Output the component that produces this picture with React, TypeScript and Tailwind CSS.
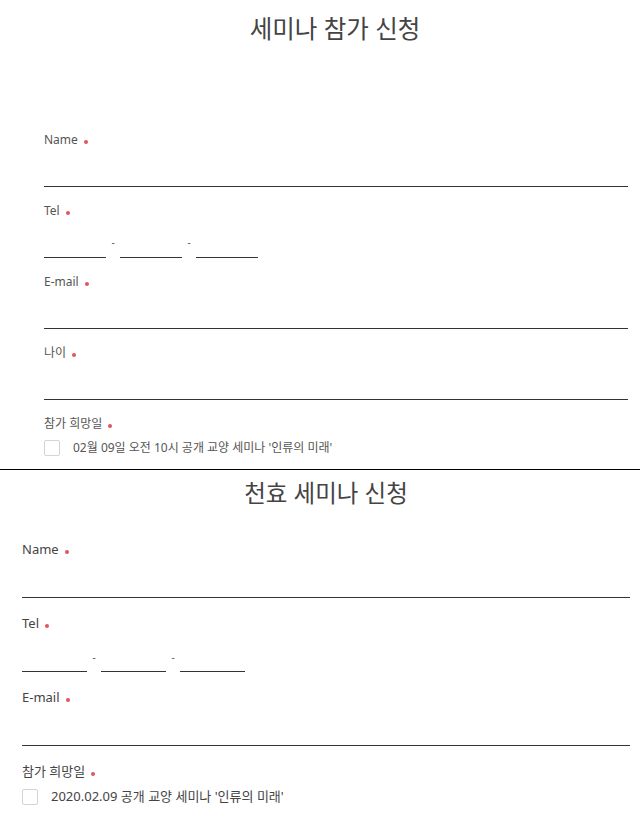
import React from "react";

const FONT = { fontFamily: '"Noto Sans", "Noto Sans CJK KR", sans-serif' };

function Label({ text, size }: { text: string; size: "top" | "bottom" }) {
  return (
    <div
      className={
        size === "top"
          ? "flex items-center h-[18px] text-[12px] text-[#555]"
          : "flex items-center h-[18px] text-[13px] text-[#444]"
      }
    >
      <span>{text}</span>
      <span className="ml-[6px] mt-[3px] w-[4px] h-[4px] rounded-full bg-[#e0565b]" />
    </div>
  );
}

function TextField({ label, size }: { label: string; size: "top" | "bottom" }) {
  return (
    <div className={size === "top" ? "mb-[15px]" : "mb-[17px]"}>
      <Label text={label} size={size} />
      <div
        className={
          size === "top"
            ? "h-[38px] border-b border-[#333]"
            : "h-[39px] border-b border-[#333]"
        }
      />
    </div>
  );
}

function TelField({ size }: { size: "top" | "bottom" }) {
  const seg = size === "top" ? "w-[62px] h-full border-b border-[#333]" : "w-[65px] h-full border-b border-[#333]";
  const dash =
    size === "top"
      ? "w-[14px] h-full flex justify-center pt-[17px] text-[10px] leading-[10px] text-[#555]"
      : "w-[14px] h-full flex justify-center pt-[19px] text-[10px] leading-[10px] text-[#555]";
  return (
    <div className={size === "top" ? "mb-[15px]" : "mb-[17px]"}>
      <Label text="Tel" size={size} />
      <div className={size === "top" ? "flex h-[38px]" : "flex h-[39px]"}>
        <div className={seg} />
        <div className={dash}>-</div>
        <div className={seg} />
        <div className={dash}>-</div>
        <div className={seg} />
      </div>
    </div>
  );
}

function DateField({ size, text }: { size: "top" | "bottom"; text: string }) {
  return (
    <div>
      <Label text="참가 희망일" size={size} />
      <div
        className={
          size === "top"
            ? "mt-[7px] flex items-center h-[16px]"
            : "mt-[8px] flex items-center h-[16px]"
        }
      >
        <div className="w-[16px] h-[16px] rounded-[2px] border border-[#d4d4d4] bg-white" />
        <span
          className={
            size === "top"
              ? "ml-[13px] text-[12px] text-[#555]"
              : "ml-[13px] text-[13px] text-[#444]"
          }
        >
          {text}
        </span>
      </div>
    </div>
  );
}

export default function App() {
  return (
    <div className="w-[640px] h-[824px] bg-white overflow-hidden" style={FONT}>
      {/* Top form */}
      <div className="h-[470px] border-b border-black">
        <div className="pt-[13px] pl-[30px] text-center text-[24.5px] leading-[32px] text-[#444]">
          세미나 참가 신청
        </div>
        <div className="mt-[86px] pl-[44px] pr-[12px]">
          <TextField label="Name" size="top" />
          <TelField size="top" />
          <TextField label="E-mail" size="top" />
          <TextField label="나이" size="top" />
          <DateField size="top" text="02월 09일 오전 10시 공개 교양 세미나 '인류의 미래'" />
        </div>
      </div>
      {/* Bottom form */}
      <div>
        <div className="pt-[7px] pl-[12px] text-center text-[23.5px] leading-[32px] text-[#444]">
          천효 세미나 신청
        </div>
        <div className="mt-[32px] pl-[22px] pr-[10px]">
          <TextField label="Name" size="bottom" />
          <TelField size="bottom" />
          <TextField label="E-mail" size="bottom" />
          <DateField size="bottom" text="2020.02.09 공개 교양 세미나 '인류의 미래'" />
        </div>
      </div>
    </div>
  );
}
